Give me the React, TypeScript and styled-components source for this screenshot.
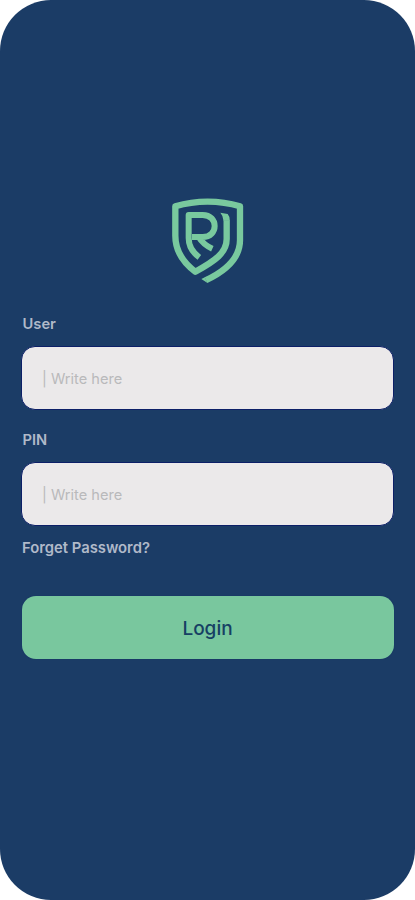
import React from "react";
import styled, { createGlobalStyle } from "styled-components";

const GlobalStyle = createGlobalStyle`
  *, *::before, *::after { box-sizing: border-box; }
  body { margin: 0; background: #fff; font-family: Inter, sans-serif; }
`;

const Screen = styled.main`
  width: 415px;
  height: 900px;
  padding: 190px 21px 0;
  display: flex;
  flex-direction: column;
  background: #1b3c66;
  border-radius: 51px;
  overflow: hidden;
`;

const Logo = styled.svg`
  width: 96px;
  height: 100px;
  align-self: center;
  flex: none;
  fill: none;
  stroke: #79c99e;
`;

const Form = styled.form`
  display: flex;
  flex-direction: column;
  padding-top: 24px;
`;

const Field = styled.div`
  display: flex;
  flex-direction: column;
  height: 116px;
`;

const Label = styled.label`
  height: 20px;
  margin: 0 0 12px 1.5px;
  font-size: 14.7px;
  font-weight: 600;
  line-height: 20px;
  color: #b0b9c9;
`;

const Input = styled.input`
  height: 64px;
  padding: 2px 20px 0;
  border: 1px solid #0c1f67;
  border-radius: 14px;
  outline: none;
  background: #ebe9ea;
  font: 400 14.6px Inter, sans-serif;
  color: #1b3c66;

  &::placeholder {
    color: #b9b9bb;
    opacity: 1;
  }
`;

const ForgotLink = styled.a`
  margin: -8px 0 0 1px;
  height: 20px;
  font-size: 14.8px;
  font-weight: 600;
  line-height: 20px;
  color: #b0b9c9;
`;

const LoginButton = styled.button`
  height: 63px;
  margin: 38px 0 0 1px;
  padding: 2px 1px 0 0;
  border: 0;
  border-radius: 14px;
  background: #79c79e;
  box-shadow: 0 0 1px #102b63;
  font: 500 19px Inter, sans-serif;
  color: #164064;
`;

export default function App() {
  return (
    <>
      <GlobalStyle />
      <Screen>
        <Logo viewBox="0 0 288 300" aria-label="RJ">
          <path
            strokeWidth="19"
            strokeLinejoin="round"
            d="M138 270.5C190 246 240 211 240 151V49Q193 35 143 35Q93 35 46 49V137C46 186 70 218 106 245C166 212 200 188 200 147V91"
          />
          <path
            fill="#79c99e"
            stroke="none"
            d="M124 267L134.5 261.5L142.5 279ZM181 68L203 72Q209 78 209.5 92H190.5Q190 78 181 68Z"
          />
          <path
            strokeWidth="18"
            strokeLinejoin="round"
            d="M118 202Q86 179 86 144V75H128C176 75 176 141 128 141H96M116 141Q130 164 157 176"
          />
        </Logo>
        <Form onSubmit={(event) => event.preventDefault()}>
          <Field>
            <Label htmlFor="user">User</Label>
            <Input id="user" placeholder="| Write here" />
          </Field>
          <Field>
            <Label htmlFor="pin">PIN</Label>
            <Input id="pin" type="password" placeholder="| Write here" />
          </Field>
          <ForgotLink>Forget Password?</ForgotLink>
          <LoginButton type="submit">Login</LoginButton>
        </Form>
      </Screen>
    </>
  );
}
